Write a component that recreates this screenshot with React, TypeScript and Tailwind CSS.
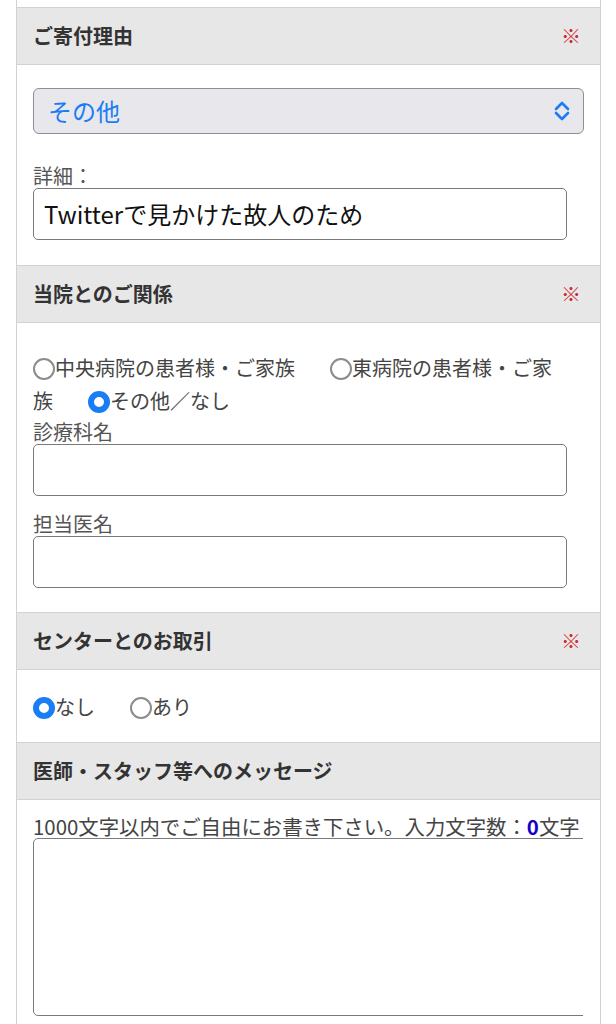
type RadioProps = {
  label: string;
  checked?: boolean;
  last?: boolean;
};

function Radio({ label, checked, last }: RadioProps) {
  return (
    <span className={last ? "" : "mr-[35px]"}>
      <span
        className={
          checked
            ? "inline-block h-[22px] w-[22px] rounded-full border-[6px] border-[#1a7df5] bg-white align-[-4px]"
            : "inline-block h-[22px] w-[22px] rounded-full border-2 border-[#8c8c8c] bg-white align-[-4px]"
        }
      />
      <span>{label}</span>
    </span>
  );
}

function Header({ title, required }: { title: string; required?: boolean }) {
  return (
    <div className="flex h-[58px] items-center justify-between border-y border-[#d2d2d2] bg-[#e7e7e7] pl-4 pr-[19px]">
      <span className="text-[20px] font-bold text-[#333]">{title}</span>
      {required && <span className="text-[20px] text-[#d0282e]">※</span>}
    </div>
  );
}

export default function App() {
  return (
    <div className="min-h-screen bg-white font-['Noto_Sans_CJK_JP',sans-serif]">
      <div className="ml-4 mr-[15px] border-x border-[#d2d2d2] pt-[7px]">
        <Header title="ご寄付理由" required />
        <div className="pb-[25px] pl-4 pr-[33px] pt-[23px]">
          <div className="flex h-[46px] w-[calc(100%+17px)] items-center justify-between rounded-[6px] border border-[#8e8e93] bg-[#e8e8ec] pl-[14px] pr-[12px]">
            <span className="text-[24px] text-[#1a7df5]">その他</span>
            <svg width="18" height="22" viewBox="0 0 18 22" fill="none" stroke="#1a7df5" strokeWidth="2.6" strokeLinecap="round" strokeLinejoin="round">
              <polyline points="3,9 9,3 15,9" />
              <polyline points="3,13 9,19 15,13" />
            </svg>
          </div>
          <div className="mt-[30px] text-[20px] leading-[24px] text-[#555]">詳細：</div>
          <div className="flex h-[52px] items-center rounded-[5px] border border-[#7a7a7a] px-[10px] text-[24px] text-[#111]">
            Twitterで見かけた故人のため
          </div>
        </div>

        <Header title="当院とのご関係" required />
        <div className="pb-6 pl-4 pr-[33px] pt-[28px]">
          <div className="text-[20px] leading-[33px] text-[#444]">
            <Radio label="中央病院の患者様・ご家族" />
            <Radio label="東病院の患者様・ご家族" />
            <Radio label="その他／なし" checked last />
          </div>
          <div className="mt-[3px] text-[20px] leading-[24px] text-[#555]">診療科名</div>
          <div className="h-[52px] rounded-[5px] border border-[#7a7a7a]" />
          <div className="mt-4 text-[20px] leading-[24px] text-[#555]">担当医名</div>
          <div className="h-[52px] rounded-[5px] border border-[#7a7a7a]" />
        </div>

        <Header title="センターとのお取引" required />
        <div className="pb-[19px] pl-4 pr-[33px] pt-5">
          <div className="text-[20px] leading-[33px] text-[#444]">
            <Radio label="なし" checked />
            <Radio label="あり" last />
          </div>
        </div>

        <Header title="医師・スタッフ等へのメッセージ" />
        <div className="pb-6 pl-4 pr-[17px] pt-[14px]">
          <div className="whitespace-nowrap text-[20.4px] leading-[24px] text-[#444]">
            1000文字以内でご自由にお書き下さい。入力文字数：<span className="font-bold text-[#1400c8]">0</span>文字
          </div>
          <div className="overflow-hidden">
            <div className="h-[178px] w-[calc(100%+20px)] rounded-[5px] border border-[#7a7a7a]" />
          </div>
        </div>
      </div>
    </div>
  );
}
